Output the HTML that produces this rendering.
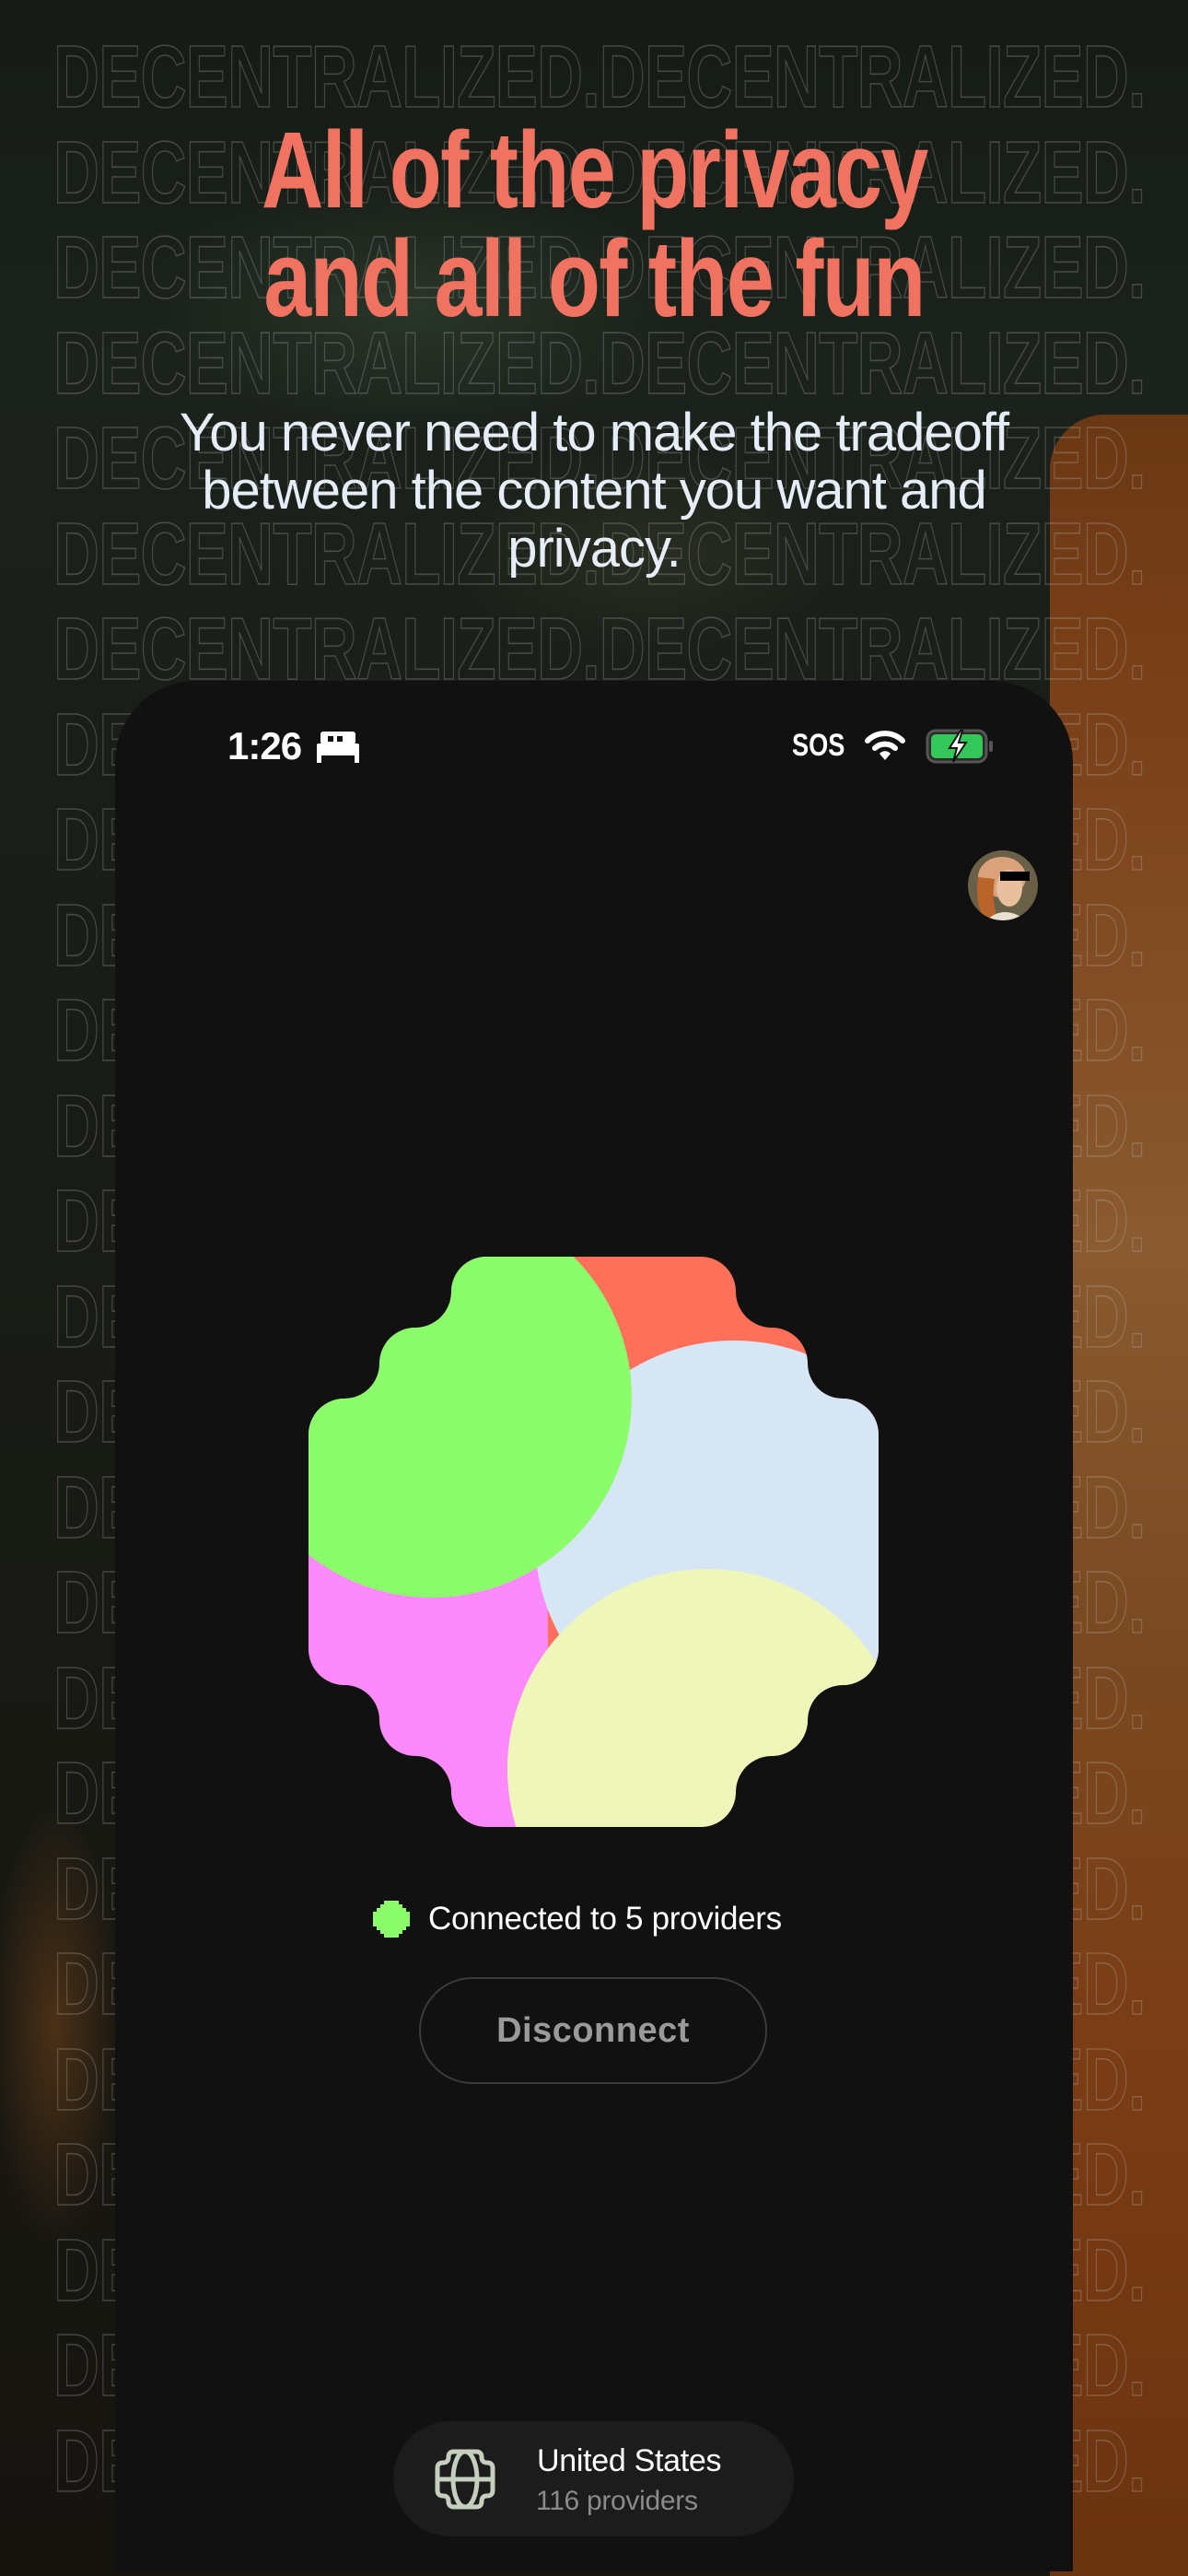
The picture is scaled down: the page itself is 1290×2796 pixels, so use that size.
<!DOCTYPE html>
<html><head><meta charset="utf-8">
<style>
html,body{margin:0;padding:0}
body{width:1290px;height:2796px;position:relative;overflow:hidden;font-family:"Liberation Sans",sans-serif;background:#161b15}
.bg1{position:absolute;left:0;top:0;width:1290px;height:2796px;
background:
 radial-gradient(ellipse 420px 200px at 450px 330px, rgba(60,80,60,0.45), transparent 70%),
 radial-gradient(ellipse 300px 160px at 700px 600px, rgba(70,70,50,0.35), transparent 70%),
 linear-gradient(180deg,#151a15 0,#1b221b 400px,#1a1e18 800px,#16140f 2796px);}
.bg2{position:absolute;left:1140px;top:450px;width:150px;height:2346px;
background:linear-gradient(180deg,#6a3814 0,#7a4018 300px,#8a5a30 900px,#7a4a22 1300px,#7a3c14 1800px,#6a3410 2346px);
border-radius:60px 0 0 0}
.bg4{position:absolute;left:0;top:1900px;width:140px;height:700px;background:radial-gradient(ellipse 90px 300px at 60px 300px,rgba(110,65,25,0.6),transparent 80%)}
.pat{position:absolute;left:0;top:0;width:1290px;height:2796px;}
.row{position:absolute;left:58px;white-space:nowrap;font-family:"Liberation Sans",sans-serif;font-weight:bold;
 font-size:96px;line-height:96px;color:transparent;-webkit-text-stroke:1.6px rgba(200,200,200,0.26);
 transform-origin:0 0;transform:scaleX(0.72);letter-spacing:-1px}
.h1{position:absolute;left:0;width:1290px;text-align:center;color:#F07361;font-weight:bold;font-size:118px;line-height:118px}
.h1 span{display:inline-block;transform:scaleX(0.79);letter-spacing:-2px}
.sub{position:absolute;left:150px;width:990px;top:438px;text-align:center;color:#E6EDF7;font-size:58px;line-height:63px;letter-spacing:-1px}
.panel{position:absolute;left:125px;top:739px;width:1040px;height:2052px;background:#111111;border-radius:88px 88px 0 0}
.time{position:absolute;left:247px;top:786px;color:#fff;font-weight:bold;font-size:42px;letter-spacing:-1px}
.sos{position:absolute;left:860px;top:790px;color:#fff;font-weight:bold;font-size:34px;transform:scaleX(0.8);transform-origin:0 0}
.conn{position:absolute;left:465px;top:2063px;color:#fff;font-size:35px;letter-spacing:-0.3px}
.btn{position:absolute;left:455px;top:2146px;width:374px;height:112px;border:2px solid #3b3b3b;border-radius:60px;
 color:#9a9a9a;font-weight:bold;font-size:38px;line-height:112px;text-align:center;letter-spacing:0.5px}
.pill{position:absolute;left:427px;top:2628px;width:435px;height:125px;background:#1c1c1c;border-radius:63px}
.us{position:absolute;left:583px;top:2652px;color:#fff;font-size:34px;letter-spacing:-0.3px}
.pr{position:absolute;left:582px;top:2698px;color:#8a8a8a;font-size:30px;letter-spacing:-0.3px}
</style></head><body>
<div class="bg1"></div><div class="bg2"></div><div class="bg4"></div>
<div class="pat">
<div class="row" style="top:36px">DECENTRALIZED.DECENTRALIZED.</div>
<div class="row" style="top:140px">DECENTRALIZED.DECENTRALIZED.</div>
<div class="row" style="top:243px">DECENTRALIZED.DECENTRALIZED.</div>
<div class="row" style="top:347px">DECENTRALIZED.DECENTRALIZED.</div>
<div class="row" style="top:450px">DECENTRALIZED.DECENTRALIZED.</div>
<div class="row" style="top:554px">DECENTRALIZED.DECENTRALIZED.</div>
<div class="row" style="top:657px">DECENTRALIZED.DECENTRALIZED.</div>
<div class="row" style="top:761px">DECENTRALIZED.DECENTRALIZED.</div>
<div class="row" style="top:864px">DECENTRALIZED.DECENTRALIZED.</div>
<div class="row" style="top:968px">DECENTRALIZED.DECENTRALIZED.</div>
<div class="row" style="top:1071px">DECENTRALIZED.DECENTRALIZED.</div>
<div class="row" style="top:1175px">DECENTRALIZED.DECENTRALIZED.</div>
<div class="row" style="top:1278px">DECENTRALIZED.DECENTRALIZED.</div>
<div class="row" style="top:1382px">DECENTRALIZED.DECENTRALIZED.</div>
<div class="row" style="top:1485px">DECENTRALIZED.DECENTRALIZED.</div>
<div class="row" style="top:1589px">DECENTRALIZED.DECENTRALIZED.</div>
<div class="row" style="top:1692px">DECENTRALIZED.DECENTRALIZED.</div>
<div class="row" style="top:1796px">DECENTRALIZED.DECENTRALIZED.</div>
<div class="row" style="top:1899px">DECENTRALIZED.DECENTRALIZED.</div>
<div class="row" style="top:2003px">DECENTRALIZED.DECENTRALIZED.</div>
<div class="row" style="top:2106px">DECENTRALIZED.DECENTRALIZED.</div>
<div class="row" style="top:2210px">DECENTRALIZED.DECENTRALIZED.</div>
<div class="row" style="top:2313px">DECENTRALIZED.DECENTRALIZED.</div>
<div class="row" style="top:2417px">DECENTRALIZED.DECENTRALIZED.</div>
<div class="row" style="top:2520px">DECENTRALIZED.DECENTRALIZED.</div>
<div class="row" style="top:2624px">DECENTRALIZED.DECENTRALIZED.</div>
</div>

<div class="h1" style="top:126px"><span>All of the privacy</span></div>
<div class="h1" style="top:244px"><span>and all of the fun</span></div>
<div class="sub">You never need to make the tradeoff between the content you want and privacy.</div>

<div class="panel"></div>
<div class="time">1:26</div>
<svg style="position:absolute;left:344px;top:794px" width="46" height="34" viewBox="0 0 46 34">
 <rect x="4" y="0" width="38" height="14" rx="3" fill="#fff"/>
 <rect x="12" y="5" width="6" height="6" fill="#111"/><rect x="22" y="5" width="6" height="6" fill="#111"/>
 <rect x="0" y="13" width="46" height="13" rx="2" fill="#fff"/>
 <rect x="0" y="24" width="5" height="10" fill="#fff"/><rect x="41" y="24" width="5" height="10" fill="#fff"/>
</svg>
<div class="sos">SOS</div>
<svg style="position:absolute;left:939px;top:792px" width="44" height="34" viewBox="0 0 44 34">
 <path d="M3 12 A27 27 0 0 1 41 12" stroke="#fff" stroke-width="6" fill="none" stroke-linecap="round"/>
 <path d="M11 20 A16 16 0 0 1 33 20" stroke="#fff" stroke-width="6" fill="none" stroke-linecap="round"/>
 <path d="M16 26 L22 33 L28 26 A8 8 0 0 0 16 26Z" fill="#fff"/>
</svg>
<svg style="position:absolute;left:1005px;top:791px" width="76" height="38" viewBox="0 0 76 38">
 <rect x="2" y="2" width="64" height="34" rx="9" fill="#2a2a2a" stroke="#555" stroke-width="3"/>
 <rect x="6" y="6" width="56" height="26" rx="5" fill="#34C759"/>
 <rect x="69" y="13" width="4" height="12" rx="2" fill="#555"/>
 <path d="M38 2 L26 21 L34 21 L30 36 L44 15 L36 15 L40 2Z" fill="#fff" stroke="#111" stroke-width="2"/>
</svg>
<svg style="position:absolute;left:1050px;top:922px" width="78" height="78" viewBox="0 0 78 78">
 <defs><clipPath id="av"><circle cx="39" cy="39" r="38"/></clipPath></defs>
 <g clip-path="url(#av)">
  <rect width="78" height="78" fill="#6a6048"/>
  <ellipse cx="38" cy="30" rx="26" ry="22" fill="#d9a27a"/>
  <path d="M12 30 Q8 60 20 78 L34 78 Q26 55 30 32Z" fill="#b8642a"/>
  <ellipse cx="46" cy="42" rx="14" ry="20" fill="#e8c0a0"/>
  <path d="M20 78 Q40 58 66 78Z" fill="#e8e0d0"/>
  <rect x="36" y="24" width="32" height="10" fill="#000"/>
 </g>
</svg>

<svg style="position:absolute;left:335px;top:1364px" width="619" height="619" viewBox="0 0 619 619">
 <defs><clipPath id="bl">
 <path d="M193,0 H426 A38,38 0 0 1 464,38 A39,39 0 0 0 503,77 A39,39 0 0 1 542,116 A38,38 0 0 0 580,154 A39,39 0 0 1 619,193 V426 A39,39 0 0 1 580,465 A38,38 0 0 0 542,503 A39,39 0 0 1 503,542 A39,39 0 0 0 464,581 A38,38 0 0 1 426,619 H193 A38,38 0 0 1 155,581 A39,39 0 0 0 116,542 A39,39 0 0 1 77,503 A38,38 0 0 0 39,465 A39,39 0 0 1 0,426 V193 A39,39 0 0 1 39,154 A38,38 0 0 0 77,116 A39,39 0 0 1 116,77 A39,39 0 0 0 155,38 A38,38 0 0 1 193,0Z"/>
 </clipPath></defs>
 <g clip-path="url(#bl)">
  <rect x="0" y="0" width="262" height="619" fill="#FC8AFB"/>
  <rect x="260" y="0" width="359" height="619" fill="#FF705B"/>
  <circle cx="462" cy="307" r="216" fill="#D6E6F5"/>
  <circle cx="134" cy="153" r="217" fill="#8BFC6A"/>
  <circle cx="433" cy="556" r="217" fill="#EEF7B9"/>
 </g>
</svg>

<svg style="position:absolute;left:405px;top:2063px" width="40" height="40" viewBox="0 0 40 40">
 <path d="M12 0 H28 V4 H32 V8 H36 V12 H40 V28 H36 V32 H32 V36 H28 V40 H12 V36 H8 V32 H4 V28 H0 V12 H4 V8 H8 V4 H12Z" fill="#8BFC6A"/>
</svg>
<div class="conn">Connected to 5 providers</div>
<div class="btn">Disconnect</div>

<div class="pill"></div>
<svg style="position:absolute;left:471px;top:2657px" width="68" height="68" viewBox="0 0 68 68">
 <g fill="none" stroke="#C5CFBD" stroke-width="5">
  <path d="M22 4 H46 Q52 4 52 10 Q52 16 58 16 Q64 16 64 22 V46 Q64 52 58 52 Q52 52 52 58 Q52 64 46 64 H22 Q16 64 16 58 Q16 52 10 52 Q4 52 4 46 V22 Q4 16 10 16 Q16 16 16 10 Q16 4 22 4Z"/>
  <ellipse cx="34" cy="34" rx="13" ry="30"/>
  <line x1="4" y1="34" x2="64" y2="34"/>
 </g>
</svg>
<div class="us">United States</div>
<div class="pr">116 providers</div>
</body></html>
